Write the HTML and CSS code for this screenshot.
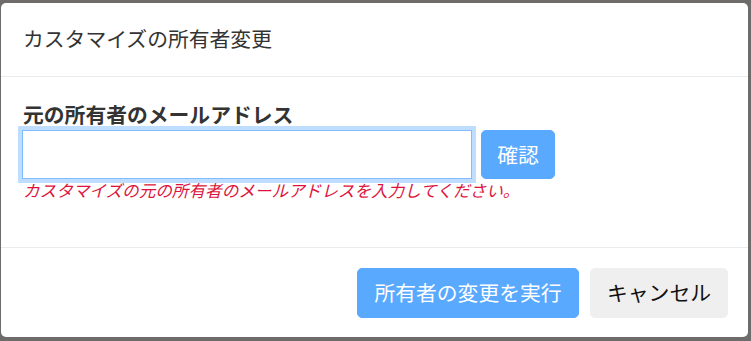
FILE: index.html
```html
<!DOCTYPE html>
<html lang="ja">
<head>
    <meta charset="UTF-8">
    <meta name="viewport" content="width=device-width, initial-scale=1.0">
    <title>カスタマイズの所有者変更</title>
    <link rel="stylesheet" href="styles.css">
</head>
<body>
    <div class="backdrop">
        <div class="modal">
            <div class="modal-header">
                <h5 class="modal-title">カスタマイズの所有者変更</h5>
            </div>

            <div class="modal-body">
                <div class="form-group">
                    <label for="owner-email">元の所有者のメールアドレス</label>
                    <div class="input-row">
                        <input type="text" id="owner-email" class="form-control is-focused">
                        <button class="btn btn-primary" disabled>確認</button>
                    </div>
                    <small class="error-text">カスタマイズの元の所有者のメールアドレスを入力してください。</small>
                </div>
            </div>

            <div class="modal-footer">
                <button class="btn btn-primary" disabled>所有者の変更を実行</button>
                <button class="btn btn-secondary">キャンセル</button>
            </div>
        </div>
    </div>
</body>
</html>
```

FILE: styles.css
```css
* {
    margin: 0;
    padding: 0;
    box-sizing: border-box;
}

body {
    font-family: "Noto Sans CJK JP", "Noto Sans", sans-serif;
    font-size: 20.8px;
    line-height: 1.5;
    color: #333;
    background: #6d6c6b;
    width: 751px;
    height: 341px;
    overflow: hidden;
}

.backdrop {
    padding: 3px 3px 4px 1px;
}

.modal {
    width: 747px;
    height: 334px;
    background: #fff;
    border-radius: 5px;
    display: flex;
    flex-direction: column;
}

.modal-header {
    height: 74px;
    padding: 20px 21px;
    border-bottom: 1px solid #e9ecef;
}

.modal-title {
    font-size: 20.8px;
    font-weight: 400;
    line-height: 31px;
    margin-left: 1px;
}

.modal-body {
    padding: 21px 21px 20px;
    height: 170px;
}

.form-group label {
    display: block;
    font-weight: 700;
    line-height: 32px;
    margin-left: 1px;
}

.input-row {
    display: flex;
    align-items: flex-start;
    gap: 9px;
}

.form-control {
    width: 450px;
    height: 49px;
    border: 1px solid #ced4da;
    border-radius: 0;
    font-family: inherit;
    font-size: 20.8px;
    padding: 0 15px;
    outline: none;
}

.form-control.is-focused {
    border-color: #80bdff;
    box-shadow: 0 0 0 4px #bfdeff;
}

.btn {
    font-family: inherit;
    font-size: 20.8px;
    line-height: 31px;
    padding: 8px 16px;
    border: 1px solid transparent;
    border-radius: 5px;
    cursor: pointer;
}

.btn-primary {
    background: #59a9ff;
    border-color: #59a9ff;
    color: #fff;
}

.input-row .btn-primary {
    width: 74px;
    height: 49px;
    padding: 0;
}

.btn-secondary {
    background: #efefef;
    border-color: #efefef;
    color: #111;
}

.error-text {
    display: block;
    font-size: 16.6px;
    line-height: 22px;
    color: #dc143c;
    font-style: italic;
    margin-left: 1px;
}

.modal-footer {
    flex: 1;
    display: flex;
    justify-content: flex-end;
    align-items: center;
    gap: 11px;
    padding: 0 20px;
    border-top: 1px solid #e9ecef;
}

.modal-footer .btn {
    height: 50px;
}

.modal-footer .btn-primary {
    width: 222px;
}

.modal-footer .btn-secondary {
    width: 138px;
}
```
